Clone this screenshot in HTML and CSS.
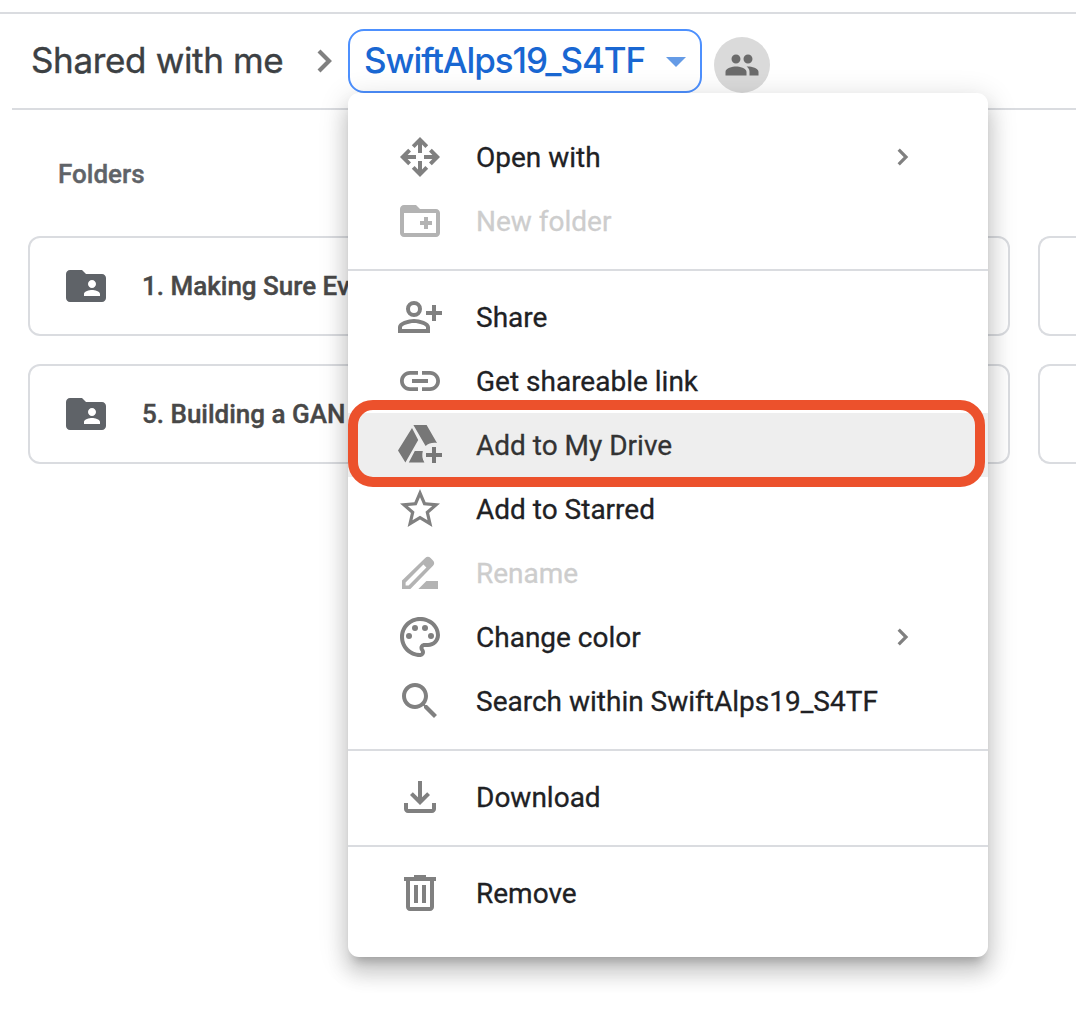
FILE: index.html
```html
<!DOCTYPE html>
<html lang="en">
<head>
<meta charset="utf-8">
<title>SwiftAlps19_S4TF</title>
<link rel="stylesheet" href="styles.css">
</head>
<body>
<header class="topbar">
  <span class="crumb">Shared with me</span>
  <svg class="crumb-arrow" viewBox="0 0 18 28"><path d="M3 4l10 10L3 24"/></svg>
  <div class="current">
    <button class="current-button"><span class="current-name">SwiftAlps19_S4TF</span><svg class="caret" viewBox="0 0 20 10"><path d="M0 0h20L10 10z"/></svg></button>
    <div class="menu">
      <div class="group">
        <div class="item"><svg class="icon" viewBox="0 0 24 24"><path d="M12 2L7.9 6.1l1.4 1.4L11 5.8V10h2V5.8l1.7 1.7 1.4-1.4zM22 12l-4.1-4.1-1.4 1.4 1.7 1.7H14v2h4.2l-1.7 1.7 1.4 1.4zM12 22l4.1-4.1-1.4-1.4-1.7 1.7V14h-2v4.2l-1.7-1.7-1.4 1.4zM2 12l4.1 4.1 1.4-1.4L5.8 13H10v-2H5.8l1.7-1.7-1.4-1.4z"/></svg><span class="label">Open with</span><svg class="more" viewBox="0 0 12 18"><path d="M1.7 1.7L9 9l-7.3 7.3"/></svg></div>
        <div class="item disabled"><svg class="icon" viewBox="0 0 24 24"><path d="M20 6h-8l-2-2H4c-1.11 0-2 .89-2 2v12c0 1.11.89 2 2 2h16c1.11 0 2-.89 2-2V8c0-1.11-.89-2-2-2zm0 12H4V8h16v10zM14 16h2v-2h2v-2h-2v-2h-2v2h-2v2h2z"/></svg><span class="label">New folder</span></div>
      </div>
      <div class="group">
        <div class="item"><svg class="icon" viewBox="0 0 24 24"><path d="M9 4a4 4 0 1 0 0 8 4 4 0 0 0 0-8zm0 6a2 2 0 1 1 0-4 2 2 0 0 1 0 4zM9 13c-2.67 0-8 1.34-8 4v3h16v-3c0-2.66-5.33-4-8-4zm6 5H3v-.99C3.2 16.29 6.3 15 9 15s5.8 1.29 6 2v1zM18 6h2v3h3v2h-3v3h-2v-3h-3V9h3z"/></svg><span class="label">Share</span></div>
        <div class="item"><svg class="icon" viewBox="0 0 24 24"><path d="M3.9 12c0-1.71 1.39-3.1 3.1-3.1h4V7H7c-2.76 0-5 2.24-5 5s2.24 5 5 5h4v-1.9H7c-1.71 0-3.1-1.39-3.1-3.1zM8 13h8v-2H8v2zm9-6h-4v1.9h4c1.71 0 3.1 1.39 3.1 3.1s-1.39 3.1-3.1 3.1h-4V17h4c2.76 0 5-2.24 5-5s-2.24-5-5-5z"/></svg><span class="label">Get shareable link</span></div>
        <div class="item active"><svg class="icon" viewBox="0 0 24 24"><path d="M8 3.5l3.1 6L4.7 20.8 1 14.8zM8.7 2h6.6l5.2 9c-2.2-.3-4.2.1-5.7 1.5zM9.4 15h4c-.5 2-.3 4 .8 5.8H6.4zM18 13h2v3h3v2h-3v3h-2v-3h-3v-2h3z"/></svg><span class="label">Add to My Drive</span></div>
        <div class="item"><svg class="icon" viewBox="0 0 24 24"><path d="M22 9.24l-7.19-.62L12 2 9.19 8.63 2 9.24l5.46 4.73L5.82 21 12 17.27 18.18 21l-1.63-7.03L22 9.24zM12 15.4l-3.76 2.27 1-4.28-3.32-2.88 4.38-.38L12 6.1l1.71 4.04 4.38.38-3.32 2.88 1 4.28L12 15.4z"/></svg><span class="label">Add to Starred</span></div>
        <div class="item disabled"><svg class="icon" viewBox="0 0 24 24"><path fill-rule="evenodd" d="M3 20v-4.2L14.6 4.5c.8-.8 1.9-.8 2.7 0l1.2 1.2c.8.8.8 1.9 0 2.7L7.2 20zM4.8 16.7v1.5h1.5l8.9-8.9-1.5-1.5zM11.2 20l4-4H21v4z"/></svg><span class="label">Rename</span></div>
        <div class="item"><svg class="icon" viewBox="0 0 24 24"><path d="M12 22C6.49 22 2 17.51 2 12S6.49 2 12 2s10 4.04 10 9c0 3.31-2.69 6-6 6h-1.77c-.28 0-.5.22-.5.5 0 .12.05.23.13.33.41.47.64 1.06.64 1.67 0 1.38-1.12 2.5-2.5 2.5zm0-18c-4.41 0-8 3.59-8 8s3.59 8 8 8c.28 0 .5-.22.5-.5 0-.16-.08-.28-.14-.35-.41-.46-.63-1.05-.63-1.65 0-1.38 1.12-2.5 2.5-2.5H16c2.21 0 4-1.79 4-4 0-3.86-3.59-7-8-7z"/><circle cx="6.5" cy="11.5" r="1.5"/><circle cx="9.5" cy="7.5" r="1.5"/><circle cx="14.5" cy="7.5" r="1.5"/><circle cx="17.5" cy="11.5" r="1.5"/></svg><span class="label">Change color</span><svg class="more" viewBox="0 0 12 18"><path d="M1.7 1.7L9 9l-7.3 7.3"/></svg></div>
        <div class="item"><svg class="icon" viewBox="0 0 24 24"><path d="M15.5 14h-.79l-.28-.27C15.41 12.59 16 11.11 16 9.5 16 5.91 13.09 3 9.5 3S3 5.91 3 9.5 5.91 16 9.5 16c1.61 0 3.09-.59 4.23-1.57l.27.28v.79l5 4.99L20.49 19l-4.99-5zm-6 0C7.01 14 5 11.99 5 9.5S7.01 5 9.5 5 14 7.01 14 9.5 11.99 14 9.5 14z"/></svg><span class="label">Search within SwiftAlps19_S4TF</span></div>
      </div>
      <div class="group">
        <div class="item"><svg class="icon" viewBox="0 0 24 24"><path d="M18 15v3H6v-3H4v3c0 1.1.9 2 2 2h12c1.1 0 2-.9 2-2v-3h-2zm-1-4l-1.41-1.41L13 12.17V4h-2v8.17L8.41 9.59 7 11l5 5 5-5z"/></svg><span class="label">Download</span></div>
      </div>
      <div class="group">
        <div class="item"><svg class="icon" viewBox="0 0 24 24"><path fill-rule="evenodd" d="M9 3h6v1h5v2h-1v13c0 1.1-.9 2-2 2H7c-1.1 0-2-.9-2-2V6H4V4h5zM7 6v13h10V6zM9 8h2v9H9zM13 8h2v9h-2z"/></svg><span class="label">Remove</span></div>
      </div>
      <div class="marker"></div>
    </div>
  </div>
  <div class="people"><svg class="people-icon" viewBox="0 0 24 24"><path d="M16 11c1.66 0 2.99-1.34 2.99-3S17.66 5 16 5s-3 1.34-3 3 1.34 3 3 3zm-8 0c1.66 0 2.99-1.34 2.99-3S9.66 5 8 5 5 6.34 5 8s1.34 3 3 3zm0 2c-2.33 0-7 1.17-7 3.5V19h14v-2.5c0-2.33-4.67-3.5-7-3.5zm8 0c-.29 0-.62.02-.97.05 1.16.84 1.97 1.97 1.97 3.45V19h6v-2.5c0-2.33-4.67-3.5-7-3.5z"/></svg></div>
</header>
<main class="content">
  <h2 class="heading">Folders</h2>
  <div class="cards">
    <div class="card"><svg class="icon" viewBox="0 0 24 24"><path d="M20 6h-8l-2-2H4c-1.1 0-2 .9-2 2v12c0 1.1.9 2 2 2h16c1.1 0 2-.9 2-2V8c0-1.1-.9-2-2-2zm-5 3c1.1 0 2 .9 2 2s-.9 2-2 2-2-.9-2-2 .9-2 2-2zm4 8h-8v-1c0-1.33 2.67-2 4-2s4 .67 4 2v1z"/></svg><span class="card-name">1. Making Sure Ev</span></div>
    <div class="card"></div>
    <div class="card cut"></div>
    <div class="card"><svg class="icon" viewBox="0 0 24 24"><path d="M20 6h-8l-2-2H4c-1.1 0-2 .9-2 2v12c0 1.1.9 2 2 2h16c1.1 0 2-.9 2-2V8c0-1.1-.9-2-2-2zm-5 3c1.1 0 2 .9 2 2s-.9 2-2 2-2-.9-2-2 .9-2 2-2zm4 8h-8v-1c0-1.33 2.67-2 4-2s4 .67 4 2v1z"/></svg><span class="card-name">5. Building a GAN</span></div>
    <div class="card"></div>
    <div class="card cut"></div>
  </div>
</main>
</body>
</html>
```
FILE: styles.css
```css
* { box-sizing: border-box; }
body {
  margin: 0;
  padding-top: 12px;
  height: 1012px;
  overflow: hidden;
  background: #fff;
  font-family: Roboto, "Liberation Sans", sans-serif;
}
svg { display: block; flex: none; }
.topbar {
  display: flex;
  align-items: flex-start;
  height: 96px;
  padding: 15px 0 0 31px;
  border-top: 2px solid #dadce0;
}
.crumb {
  width: 285px;
  font: 400 35px/62px Inter, sans-serif;
  letter-spacing: -0.35px;
  -webkit-text-stroke: 0.4px;
  color: #3c4043;
  white-space: nowrap;
}
.crumb-arrow {
  width: 18px;
  height: 28px;
  margin-top: 18px;
  fill: none;
  stroke: #808080;
  stroke-width: 4.2;
}
.current { position: relative; margin-left: 14px; }
.current-button {
  display: flex;
  align-items: center;
  justify-content: space-between;
  width: 354px;
  height: 64px;
  padding: 0 14px;
  border: 2px solid #4d90fe;
  border-radius: 16px;
  background: #fff;
}
.current-name {
  padding-bottom: 2px;
  font: 500 35px/58px Inter, sans-serif;
  letter-spacing: -1.1px;
  color: #1967d2;
}
.caret { width: 20px; height: 10px; margin-top: 2px; fill: #659be6; }
.people {
  display: flex;
  width: 56px;
  height: 56px;
  margin: 8px 0 0 12px;
  padding: 10px 0 0 10px;
  border-radius: 50%;
  background: #dadada;
}
.people-icon { width: 36px; height: 36px; fill: #6b6b6b; }

.content {
  margin-left: 12px;
  padding-left: 16px;
  border-top: 2px solid #dadce0;
}
.heading {
  margin: 0;
  padding: 32px 0 30px 30px;
  font-size: 26px;
  font-weight: 500;
  line-height: 64px;
  -webkit-text-stroke: 0.4px;
  color: #5f6368;
}
.cards {
  display: grid;
  grid-template-columns: 477px 477px 1fr;
  grid-auto-rows: 100px;
  gap: 28px;
}
.card {
  display: flex;
  align-items: center;
  padding-left: 32px;
  border: 2px solid #dadce0;
  border-radius: 12px;
}
.cut {
  padding: 0;
  border-right: 0;
  border-radius: 12px 0 0 12px;
}
.card .icon { fill: #5f6368; }
.card-name {
  margin-left: 32px;
  font-size: 26px;
  font-weight: 500;
  -webkit-text-stroke: 0.4px;
  color: #484848;
  white-space: nowrap;
}
.icon { width: 48px; height: 48px; fill: #808080; }

.menu {
  position: absolute;
  z-index: 2;
  top: 64px;
  left: 0;
  width: 640px;
  padding: 16px 0;
  border-radius: 11px;
  background: #fff;
  box-shadow: 0 16px 20px 2px rgba(0,0,0,.14), 0 6px 28px 4px rgba(0,0,0,.12), 0 10px 10px -6px rgba(0,0,0,.2);
}
.group { padding: 16px 0; }
.group + .group { padding-top: 14px; border-top: 2px solid #dadce0; }
.item {
  display: flex;
  align-items: center;
  height: 64px;
  padding: 0 79px 0 48px;
  font-size: 28px;
  color: #202124;
}
.label { flex: 1; margin-left: 32px; white-space: nowrap; -webkit-text-stroke: 0.3px; }
.more { width: 12px; height: 18px; fill: none; stroke: #808080; stroke-width: 3.2; }
.disabled { color: #cdcdcd; }
.disabled .icon { fill: #b3b3b3; }
.active { background: #eee; color: #333; }
.active .icon { fill: #777; }
.marker {
  position: absolute;
  top: 307px;
  left: 0;
  width: 637px;
  height: 87px;
  border: 10px solid #ec512c;
  border-radius: 25px;
}
```
